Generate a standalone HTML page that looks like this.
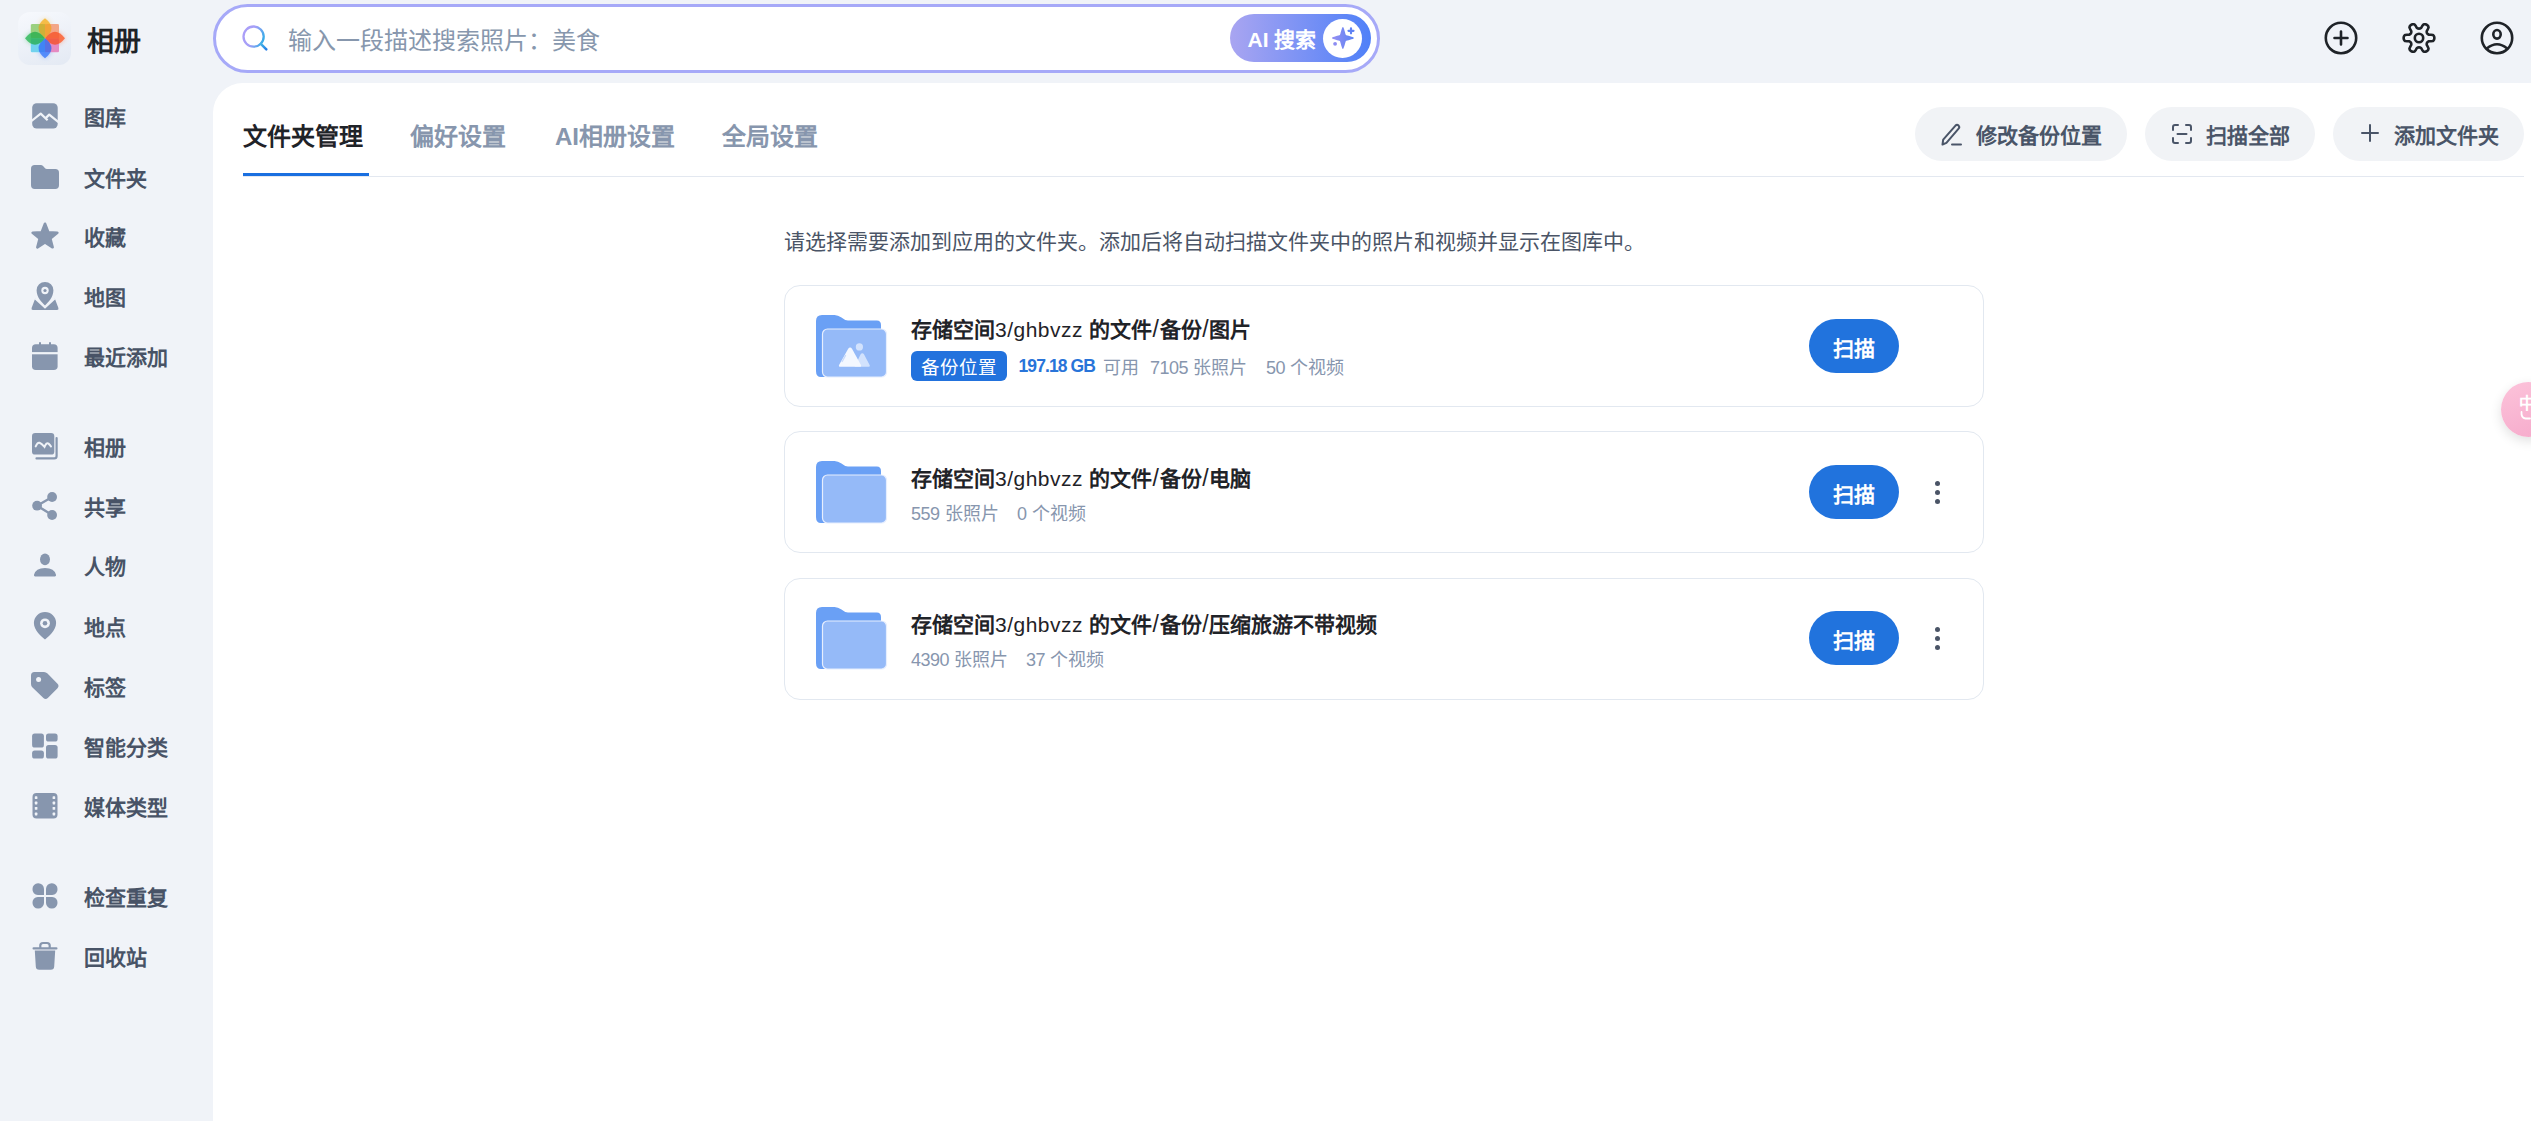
<!DOCTYPE html>
<html lang="zh-CN">
<head>
<meta charset="utf-8">
<style>
*{box-sizing:border-box;margin:0;padding:0}
html,body{width:2531px;height:1121px;overflow:hidden;background:#f0f3f8;font-family:"Liberation Sans",sans-serif;}
.abs{position:absolute}
.logo{left:18px;top:12px;width:53px;height:53px;border-radius:12px;background:linear-gradient(160deg,#f7f9fd,#e3e9f3);}
.brand{left:87px;top:22px;font-size:27px;font-weight:700;color:#1f2328;line-height:40px;white-space:nowrap}
.navtx{left:84px;font-size:21px;font-weight:700;color:#485366;line-height:36px;padding-top:2.5px;white-space:nowrap}
.nav .ic{position:absolute;left:31px;top:6px;width:28px;height:28px}
.nav .tx{position:absolute;left:84px;top:0;font-size:22px;font-weight:700;color:#485366;line-height:40px;white-space:nowrap}
.search{left:213px;top:4px;width:1167px;height:69px;border-radius:35px;border:3px solid #a6a9f8;background:#fff}
.ph{left:288px;top:22.5px;font-size:24px;font-weight:350;color:#8797ad;line-height:36px;white-space:nowrap}
.aibtn{left:1230px;top:14px;width:141px;height:48px;border-radius:24px;background:linear-gradient(90deg,#a9a5f1,#4f80f8)}
.aitx{left:1247.5px;top:21.5px;font-size:21px;font-weight:700;color:#fff;line-height:36px;white-space:nowrap}
.aicirc{left:1323px;top:19px;width:39px;height:39px;border-radius:50%;background:#fff}
.panel{left:213px;top:83px;width:2318px;height:1038px;background:#fff;border-top-left-radius:30px}
.tab{top:119px;font-size:24px;font-weight:700;line-height:36px;color:#8796ad;white-space:nowrap}
.tabline{left:243px;top:176px;width:2281px;height:1px;background:#e3e8f0}
.tabul{left:243px;top:172.5px;width:126px;height:3.5px;background:#1a6fe0}
.tbtn{top:107px;height:54px;border-radius:27px;background:#f1f3f6}
.tbtx{top:119px;font-size:21px;font-weight:700;color:#4a5568;line-height:34px;white-space:nowrap}
.desc{left:784px;top:225px;font-size:21px;font-weight:350;color:#4a5466;line-height:34px;white-space:nowrap}
.card{left:784px;width:1200px;height:122px;border:1px solid #e2e8f0;border-radius:16px;background:#fff}
.ttl{left:911px;font-size:21px;font-weight:700;color:#1f2328;line-height:32px;white-space:nowrap}
.ttl span{font-weight:400}
.meta{font-size:18px;font-weight:350;color:#8796ae;line-height:30px;white-space:nowrap}
.meta .n{letter-spacing:-0.5px}
.gb{color:#2874d9;font-weight:700;font-size:17.5px;letter-spacing:-0.9px;margin-top:-1.5px}
.ttl span{letter-spacing:0.5px}
.ttl i{font-style:normal;font-weight:400;font-size:23px;padding:0 0.7px;vertical-align:-0.5px}
.badge{left:911px;width:96px;height:30px;border-radius:6px;background:#2272dd;color:#fff;font-size:18.5px;line-height:30px;padding-top:2px;text-align:center}
.scan{left:1809px;width:90px;height:54px;border-radius:27px;background:#2173dd;color:#fff;font-size:21px;font-weight:700;line-height:54px;text-align:center;padding-top:2.5px}
.kebab{left:1935px;width:6px}
.kebab i{display:block;width:5px;height:5px;border-radius:50%;background:#4a5466;margin-bottom:4px}
.float{left:2501px;top:382px;width:55px;height:55px;border-radius:50%;background:linear-gradient(160deg,#fcc3da,#f6aacb);box-shadow:0 4px 12px rgba(0,0,0,.12)}
</style>
</head>
<body>
<!-- logo -->
<div class="abs logo"></div>
<svg class="abs" style="left:15px;top:10px" width="60" height="58" viewBox="-30 -28.2 60 58">
<defs><filter id="fg" x="-50%" y="-50%" width="200%" height="200%"><feGaussianBlur stdDeviation="2.6"/></filter>
<filter id="fb" x="-20%" y="-20%" width="140%" height="140%"><feGaussianBlur stdDeviation="0.3"/></filter>
<g id="petals">
<path d="M0,0 Q13,-10 0,-20 Q-13,-10 0,0Z" fill="#f6b93a"/>
<path d="M0,0 Q10,13 20,0 Q10,-13 0,0Z" fill="#fb6a3e"/>
<path d="M0,0 Q13,10 0,20 Q-13,10 0,0Z" fill="#4a84fb"/>
<path d="M0,0 Q-10,13 -20,0 Q-10,-13 0,0Z" fill="#3fbe66"/>
</g></defs>
<g filter="url(#fg)" opacity=".45"><use href="#petals"/></g>
<g filter="url(#fb)">
<rect x="-14.2" y="-14.2" width="14.2" height="14.2" rx="1.5" fill="#b3dd9a"/>
<rect x="0" y="-14.2" width="14" height="14.2" rx="1.5" fill="#f7bca2"/>
<rect x="0" y="0" width="14" height="14" rx="1.5" fill="#eda4d3"/>
<rect x="-14.2" y="0" width="14.2" height="14" rx="1.5" fill="#8ddff3"/>
<g opacity=".9"><use href="#petals"/></g>
<g opacity=".45" style="mix-blend-mode:multiply"><rect x="-14.2" y="-14.2" width="14.2" height="14.2" fill="#b3dd9a"/><rect x="0" y="-14.2" width="14" height="14.2" fill="#f7bca2"/><rect x="0" y="0" width="14" height="14" fill="#eda4d3"/><rect x="-14.2" y="0" width="14.2" height="14" fill="#8ddff3"/></g>
</g>
</svg>
<div class="abs brand">相册</div>

<!-- search -->
<div class="abs search"></div>
<svg class="abs" style="left:240px;top:23px" width="30" height="30" viewBox="0 0 30 30">
<defs><linearGradient id="sg" gradientUnits="userSpaceOnUse" x1="3" y1="10" x2="24" y2="17"><stop offset="0" stop-color="#ab9ef8"/><stop offset=".45" stop-color="#a59ff7"/><stop offset="1" stop-color="#34ace8"/></linearGradient>
<linearGradient id="sg2" gradientUnits="userSpaceOnUse" x1="21" y1="21" x2="27" y2="27"><stop offset="0" stop-color="#44b4e6"/><stop offset="1" stop-color="#1f78e6"/></linearGradient></defs>
<circle cx="13.6" cy="13.6" r="10.1" fill="none" stroke="url(#sg)" stroke-width="2.3"/>
<line x1="20.8" y1="20.8" x2="26.3" y2="26.3" stroke="url(#sg2)" stroke-width="2.5" stroke-linecap="round"/>
</svg>
<div class="abs ph">输入一段描述搜索照片：美食</div>
<div class="abs aibtn"></div>
<div class="abs aitx">AI 搜索</div>
<div class="abs aicirc"></div>
<svg class="abs" style="left:1323px;top:19px" width="39" height="39" viewBox="0 0 39 39">
<defs><linearGradient id="spg" x1="0" y1="0" x2="1" y2="0"><stop offset="0" stop-color="#9790f2"/><stop offset="1" stop-color="#5a82f4"/></linearGradient></defs>
<path d="M19.9,7.9 C21,8 22.4,15.5 22.9,16 C23.4,16.5 30.8,17.8 30.9,19 C30.8,20.2 23.4,21.5 22.9,22 C22.4,22.5 21,30 19.9,30 C18.8,30 17.4,22.5 16.9,22 C16.4,21.5 9,20.2 8.9,19 C9,17.8 16.4,16.5 16.9,16 C17.4,15.5 18.8,8 19.9,7.9Z" fill="url(#spg)"/>
<path d="M28,9.3 v5 M25.5,11.8 h5" stroke="#5f82f4" stroke-width="2.2" stroke-linecap="round"/>
<circle cx="12.1" cy="24.8" r="1.9" fill="#8d8df2"/>
</svg>

<!-- top right icons -->
<svg class="abs" style="left:2321px;top:18px" width="40" height="40" viewBox="0 0 40 40" fill="none" stroke="#1f2328" stroke-width="2.6" stroke-linecap="round">
<circle cx="20" cy="20" r="15.2"/><path d="M20,13.5v13M13.5,20h13"/>
</svg>
<svg class="abs" style="left:2399px;top:18px" width="40" height="40" viewBox="0 0 40 40" fill="none" stroke="#1f2328" stroke-width="2.6" stroke-linejoin="round">
<path id="gear" d="M35.35,20.00 L35.27,20.80 L35.04,21.58 L34.62,22.32 L33.96,22.97 L31.93,23.20 L29.92,23.22 L29.24,23.55 L28.75,23.90 L28.38,24.27 L28.10,24.67 L27.89,25.12 L27.75,25.63 L27.69,26.23 L27.75,26.98 L28.73,28.73 L29.55,30.60 L29.31,31.50 L28.89,32.23 L28.33,32.83 L27.68,33.29 L26.94,33.63 L26.15,33.81 L25.30,33.82 L24.41,33.57 L23.20,31.93 L22.17,30.20 L21.55,29.78 L21.00,29.53 L20.49,29.39 L20.00,29.35 L19.51,29.39 L19.00,29.53 L18.45,29.78 L17.83,30.20 L16.80,31.93 L15.59,33.57 L14.70,33.82 L13.85,33.81 L13.06,33.63 L12.33,33.29 L11.67,32.83 L11.11,32.23 L10.69,31.50 L10.45,30.60 L11.27,28.73 L12.25,26.98 L12.31,26.23 L12.25,25.63 L12.11,25.12 L11.90,24.67 L11.62,24.27 L11.25,23.90 L10.76,23.55 L10.08,23.22 L8.07,23.20 L6.04,22.97 L5.38,22.32 L4.96,21.58 L4.73,20.80 L4.65,20.00 L4.73,19.20 L4.96,18.42 L5.38,17.68 L6.04,17.03 L8.07,16.80 L10.08,16.78 L10.76,16.45 L11.25,16.10 L11.62,15.73 L11.90,15.33 L12.11,14.88 L12.25,14.37 L12.31,13.77 L12.25,13.02 L11.27,11.27 L10.45,9.40 L10.69,8.50 L11.11,7.77 L11.67,7.17 L12.32,6.71 L13.06,6.37 L13.85,6.19 L14.70,6.18 L15.59,6.43 L16.80,8.07 L17.83,9.80 L18.45,10.22 L19.00,10.47 L19.51,10.61 L20.00,10.65 L20.49,10.61 L21.00,10.47 L21.55,10.22 L22.17,9.80 L23.20,8.07 L24.41,6.43 L25.30,6.18 L26.15,6.19 L26.94,6.37 L27.68,6.71 L28.33,7.17 L28.89,7.77 L29.31,8.50 L29.55,9.40 L28.73,11.27 L27.75,13.02 L27.69,13.77 L27.75,14.37 L27.89,14.88 L28.10,15.33 L28.38,15.73 L28.75,16.10 L29.24,16.45 L29.92,16.78 L31.93,16.80 L33.96,17.03 L34.62,17.68 L35.04,18.42 L35.27,19.20Z"/>
<circle cx="20" cy="20" r="4.2"/>
</svg>
<svg class="abs" style="left:2477px;top:18px" width="40" height="40" viewBox="0 0 40 40" fill="none" stroke="#1f2328" stroke-width="2.6">
<circle cx="20" cy="20" r="15.2"/><ellipse cx="20" cy="16.3" rx="3.7" ry="4.3"/><path d="M9.8,30.5 Q20,22 30.2,30.5"/>
</svg>

<!-- panel -->
<div class="abs panel"></div>
<div class="abs tab" style="left:243px;color:#1f2328">文件夹管理</div>
<div class="abs tab" style="left:410px">偏好设置</div>
<div class="abs tab" style="left:555px">AI相册设置</div>
<div class="abs tab" style="left:722px">全局设置</div>
<div class="abs tabline"></div>
<div class="abs tabul"></div>

<div class="abs tbtn" style="left:1915px;width:212px"></div>
<svg class="abs" style="left:1938px;top:121px" width="26" height="26" viewBox="0 0 26 26" fill="none" stroke="#4a5568" stroke-width="2" stroke-linecap="round" stroke-linejoin="round">
<path d="M4.5,23.5 L5.2,18.6 L17.5,4.6 Q19,3.2 20.6,4.6 Q22,6.2 20.6,7.6 L8.4,21.8 Z"/><path d="M14,23.5h9"/>
</svg>
<div class="abs tbtx" style="left:1976px">修改备份位置</div>

<div class="abs tbtn" style="left:2145px;width:170px"></div>
<svg class="abs" style="left:2169px;top:121px" width="26" height="26" viewBox="0 0 26 26" fill="none" stroke="#4a5568" stroke-width="2" stroke-linecap="round">
<path d="M4,9V6Q4,4 6,4H9M17,4h3Q22,4 22,6V9M22,17v3Q22,22 20,22H17M9,22H6Q4,22 4,20V17M8.5,13h9"/>
</svg>
<div class="abs tbtx" style="left:2206px">扫描全部</div>

<div class="abs tbtn" style="left:2333px;width:191px"></div>
<svg class="abs" style="left:2358px;top:121px" width="24" height="24" viewBox="0 0 24 24" fill="none" stroke="#4a5568" stroke-width="2" stroke-linecap="round">
<path d="M12,4v16M4,12h16"/>
</svg>
<div class="abs tbtx" style="left:2394px">添加文件夹</div>

<div class="abs desc">请选择需要添加到应用的文件夹。添加后将自动扫描文件夹中的照片和视频并显示在图库中。</div>

<!-- card 1 -->
<div class="abs card" style="top:285px"></div>
<svg class="abs" style="left:812px;top:311px" width="80" height="70" viewBox="0 0 80 70">
<path d="M4,10 Q4,4 10,4 H22.5 Q26,4 29.5,6.5 Q33,9.5 36,9.5 H64 Q69,9 69,14 V60 Q69,66 63,66 H9 Q4,66 4,60 Z" fill="#6aa0f5"/>
<rect x="10.5" y="18" width="64" height="48" rx="5" fill="#95baf8" stroke="#e6eefe" stroke-width="1.2"/>
<circle cx="47.4" cy="35.9" r="3.6" fill="#d2e2fd"/>
<path d="M50.3,42.3 Q49.3,42.3 48.5,43.6 L42.6,55.8 H56.8 Q58.6,55.8 57.6,54 L52.1,43.6 Q51.3,42.3 50.3,42.3Z" fill="#d2e2fd"/>
<path d="M38.1,36.5 Q37,36.5 36.2,37.8 L27.2,53.8 Q26.2,55.8 28.4,55.8 H47.6 Q49.8,55.8 48.8,53.8 L40,37.8 Q39.2,36.5 38.1,36.5Z" fill="#f4f8ff"/>
<path d="M33.5,44.5 L30.2,50.5" stroke="#c9dbfb" stroke-width="1.4" stroke-linecap="round"/>
</svg>
<div class="abs ttl" style="top:313px">存储空间<span>3/ghbvzz</span> 的文件<i>/</i>备份<i>/</i>图片</div>
<div class="abs badge" style="top:351px">备份位置</div>
<div class="abs meta gb" style="left:1018.5px;top:352.5px">197.18 GB</div>
<div class="abs meta" style="left:1102.5px;top:352.5px">可用</div>
<div class="abs meta" style="left:1150px;top:352.5px"><span class="n">7105</span> 张照片</div>
<div class="abs meta" style="left:1266px;top:352.5px"><span class="n">50</span> 个视频</div>
<div class="abs scan" style="top:319px">扫描</div>

<!-- card 2 -->
<div class="abs card" style="top:431px"></div>
<svg class="abs" style="left:812px;top:457px" width="80" height="70" viewBox="0 0 80 70">
<path d="M4,10 Q4,4 10,4 H22.5 Q26,4 29.5,6.5 Q33,9.5 36,9.5 H64 Q69,9 69,14 V60 Q69,66 63,66 H9 Q4,66 4,60 Z" fill="#6aa0f5"/>
<rect x="10.5" y="18" width="64" height="48" rx="5" fill="#95baf8" stroke="#e6eefe" stroke-width="1.2"/>
</svg>
<div class="abs ttl" style="top:462px">存储空间<span>3/ghbvzz</span> 的文件<i>/</i>备份<i>/</i>电脑</div>
<div class="abs meta" style="left:911px;top:498.5px"><span class="n">559</span> 张照片</div>
<div class="abs meta" style="left:1017px;top:498.5px"><span class="n">0</span> 个视频</div>
<div class="abs scan" style="top:465px">扫描</div>
<div class="abs kebab" style="top:481px"><i></i><i></i><i></i></div>

<!-- card 3 -->
<div class="abs card" style="top:578px"></div>
<svg class="abs" style="left:812px;top:603px" width="80" height="70" viewBox="0 0 80 70">
<path d="M4,10 Q4,4 10,4 H22.5 Q26,4 29.5,6.5 Q33,9.5 36,9.5 H64 Q69,9 69,14 V60 Q69,66 63,66 H9 Q4,66 4,60 Z" fill="#6aa0f5"/>
<rect x="10.5" y="18" width="64" height="48" rx="5" fill="#95baf8" stroke="#e6eefe" stroke-width="1.2"/>
</svg>
<div class="abs ttl" style="top:608px">存储空间<span>3/ghbvzz</span> 的文件<i>/</i>备份<i>/</i>压缩旅游不带视频</div>
<div class="abs meta" style="left:911px;top:644.5px"><span class="n">4390</span> 张照片</div>
<div class="abs meta" style="left:1026px;top:644.5px"><span class="n">37</span> 个视频</div>
<div class="abs scan" style="top:611px">扫描</div>
<div class="abs kebab" style="top:627px"><i></i><i></i><i></i></div>

<!-- floating -->
<div class="abs float"></div>
<div class="abs" style="left:2518.5px;top:392px;font-size:16px;color:#fff;font-weight:900;line-height:24px">中</div>
<svg class="abs" style="left:2515px;top:408px" width="16" height="14" viewBox="0 0 16 14"><path d="M6.5,4 Q6,10 10.5,10.5 H15" fill="none" stroke="#fff" stroke-width="1.8" stroke-linecap="round"/></svg>

<!-- SIDEBAR -->
<svg class="abs" style="left:25px;top:96px" width="40" height="40" viewBox="0 0 40 40"><rect x="7.2" y="7.3" width="25.5" height="25.3" rx="4.5" fill="#8796ae"/><path d="M6.5,25 L15.7,17.6 L22.6,24.2 M21.2,21.6 L24.2,18.6 L33.5,26.2" fill="none" stroke="#f0f3f8" stroke-width="2.2" stroke-linejoin="round"/></svg>
<div class="abs navtx" style="top:97.5px">图库</div>
<svg class="abs" style="left:25px;top:156.5px" width="40" height="40" viewBox="0 0 40 40"><path d="M6,11.8 Q6,8.1 9.7,8.1 H15.6 Q17.2,8.1 18.3,9.3 L19.6,10.8 Q20.6,12 22,12 H30.3 Q34,12 34,15.7 V28.3 Q34,32 30.3,32 H9.7 Q6,32 6,28.3Z" fill="#8796ae"/></svg>
<div class="abs navtx" style="top:158.0px">文件夹</div>
<svg class="abs" style="left:25px;top:215.5px" width="40" height="40" viewBox="0 0 40 40"><path d="M20.00,7.80 L23.29,16.27 L32.36,16.78 L25.33,22.53 L27.64,31.32 L20.00,26.40 L12.36,31.32 L14.67,22.53 L7.64,16.78 L16.71,16.27Z" fill="#8796ae" stroke="#8796ae" stroke-width="2.6" stroke-linejoin="round"/></svg>
<div class="abs navtx" style="top:217.0px">收藏</div>
<svg class="abs" style="left:25px;top:276px" width="40" height="40" viewBox="0 0 40 40"><path d="M20,29.5 C17,26.5 11.6,21.5 11.6,14.3 A8.4,8.4 0 0 1 28.4,14.3 C28.4,21.5 23,26.5 20,29.5Z" fill="#8796ae"/><circle cx="20" cy="14.5" r="3.7" fill="#f0f3f8"/><circle cx="20" cy="14.5" r="1.6" fill="#8796ae"/><path d="M8,34 Q6,34 6.6,32 L10.2,22.6 L20,31.6 L29.8,22.6 L33.4,32 Q34,34 32,34Z" fill="#8796ae"/><path d="M10.2,22.6 L20,31.6 L29.8,22.6" fill="none" stroke="#f0f3f8" stroke-width="1.6"/></svg>
<div class="abs navtx" style="top:277.5px">地图</div>
<svg class="abs" style="left:25px;top:336px" width="40" height="40" viewBox="0 0 40 40"><rect x="7" y="8.3" width="25.6" height="25.7" rx="3.8" fill="#8796ae"/><rect x="6" y="16.1" width="28" height="2.2" fill="#f0f3f8"/><rect x="14" y="6" width="2" height="4" rx="1" fill="#8796ae"/><rect x="24" y="6" width="2" height="4" rx="1" fill="#8796ae"/></svg>
<div class="abs navtx" style="top:337.5px">最近添加</div>
<svg class="abs" style="left:25px;top:426px" width="40" height="40" viewBox="0 0 40 40"><rect x="7" y="7" width="22.3" height="21.6" rx="3.2" fill="#8796ae"/><path d="M10.7,20.4 Q12.5,16.2 14.5,16.8 Q16.5,17.5 19.5,20.8 Q21.5,16 23.5,17.6 Q25,18.8 26,20.5" fill="none" stroke="#f0f3f8" stroke-width="2" stroke-linecap="round"/><path d="M11.5,32.4 H29.3 Q31.6,32.4 31.6,30 V12" fill="none" stroke="#8796ae" stroke-width="2.2" stroke-linecap="round"/></svg>
<div class="abs navtx" style="top:427.5px">相册</div>
<svg class="abs" style="left:25px;top:486px" width="40" height="40" viewBox="0 0 40 40"><circle cx="27.1" cy="11" r="4.9" fill="#8796ae"/><circle cx="12.1" cy="19.7" r="4.9" fill="#8796ae"/><circle cx="27.1" cy="29" r="4.9" fill="#8796ae"/><path d="M27.1,11 L12.1,19.7 L27.1,29" fill="none" stroke="#8796ae" stroke-width="2.4"/></svg>
<div class="abs navtx" style="top:487.5px">共享</div>
<svg class="abs" style="left:25px;top:545px" width="40" height="40" viewBox="0 0 40 40"><ellipse cx="20" cy="14.3" rx="5" ry="5.9" fill="#8796ae"/><path d="M10.2,31.4 Q8.6,31.4 9,29.8 Q10.5,22.9 20,22.9 Q29.5,22.9 31,29.8 Q31.4,31.4 29.8,31.4Z" fill="#8796ae"/></svg>
<div class="abs navtx" style="top:546.5px">人物</div>
<svg class="abs" style="left:25px;top:606px" width="40" height="40" viewBox="0 0 40 40"><path d="M20,33.6 C16.5,30.5 8.9,24.5 8.9,17 A11.1,11.1 0 0 1 31.1,17 C31.1,24.5 23.5,30.5 20,33.6Z" fill="#8796ae"/><circle cx="20" cy="17.3" r="4.9" fill="#f0f3f8"/><circle cx="20" cy="17.3" r="2.3" fill="#8796ae"/></svg>
<div class="abs navtx" style="top:607.5px">地点</div>
<svg class="abs" style="left:25px;top:666px" width="40" height="40" viewBox="0 0 40 40"><path d="M6,9.5 Q6,6 9.5,6 H19 Q21,6 22.5,7.5 L32.5,17.8 Q34.5,20 32.5,22.2 L22.8,32 Q20.6,34.2 18.4,32 L7.5,21.5 Q6,20 6,18Z" fill="#8796ae"/><circle cx="13.6" cy="13.6" r="2.5" fill="#f0f3f8"/></svg>
<div class="abs navtx" style="top:667.5px">标签</div>
<svg class="abs" style="left:25px;top:726px" width="40" height="40" viewBox="0 0 40 40"><rect x="7.1" y="7.6" width="11.8" height="14" rx="2.6" fill="#8796ae"/><rect x="7.1" y="24.6" width="11.8" height="8" rx="2.6" fill="#8796ae"/><rect x="21" y="7.6" width="11.6" height="8" rx="2.6" fill="#8796ae"/><rect x="21" y="19" width="11.6" height="13.6" rx="2.6" fill="#8796ae"/></svg>
<div class="abs navtx" style="top:727.5px">智能分类</div>
<svg class="abs" style="left:25px;top:786px" width="40" height="40" viewBox="0 0 40 40"><rect x="7.5" y="7" width="25" height="25.6" rx="4" fill="#8796ae"/><rect x="9.8" y="10.3" width="2.6" height="2.8" rx=".6" fill="#f0f3f8"/><rect x="9.8" y="15.6" width="2.6" height="2.8" rx=".6" fill="#f0f3f8"/><rect x="9.8" y="21" width="2.6" height="2.8" rx=".6" fill="#f0f3f8"/><rect x="9.8" y="26.6" width="2.6" height="2.8" rx=".6" fill="#f0f3f8"/><rect x="27.6" y="10.3" width="2.6" height="2.8" rx=".6" fill="#f0f3f8"/><rect x="27.6" y="15.6" width="2.6" height="2.8" rx=".6" fill="#f0f3f8"/><rect x="27.6" y="21" width="2.6" height="2.8" rx=".6" fill="#f0f3f8"/><rect x="27.6" y="26.6" width="2.6" height="2.8" rx=".6" fill="#f0f3f8"/></svg>
<div class="abs navtx" style="top:787.5px">媒体类型</div>
<svg class="abs" style="left:25px;top:876px" width="40" height="40" viewBox="0 0 40 40"><path d="M19,19 H12.8 A5.5,5.5 0 0 1 7.5,13 A5.7,5.7 0 0 1 13,7.2 A5.7,5.7 0 0 1 19,13Z" fill="#8796ae"/><path d="M21,19 H27.2 A5.5,5.5 0 0 0 32.5,13 A5.7,5.7 0 0 0 27,7.2 A5.7,5.7 0 0 0 21,13Z" fill="#8796ae"/><path d="M19,21 H12.8 A5.5,5.5 0 0 0 7.5,27 A5.7,5.7 0 0 0 13,32.6 A5.7,5.7 0 0 0 19,27Z" fill="#8796ae"/><path d="M21,21 H27.2 A5.5,5.5 0 0 1 32.5,27 A5.7,5.7 0 0 1 27,32.6 A5.7,5.7 0 0 1 21,27Z" fill="#8796ae"/></svg>
<div class="abs navtx" style="top:877.5px">检查重复</div>
<svg class="abs" style="left:25px;top:936px" width="40" height="40" viewBox="0 0 40 40"><path d="M9.8,14.6 H30.2 L29.2,30.6 Q29,33.8 25.8,33.8 H14.2 Q11,33.8 10.8,30.6Z" fill="#8796ae"/><rect x="7.5" y="11.3" width="25" height="2.3" rx="1.1" fill="#8796ae"/><path d="M15.3,12 V9.6 Q15.3,7 18,7 H22 Q24.7,7 24.7,9.6 V12" fill="none" stroke="#8796ae" stroke-width="2.2"/></svg>
<div class="abs navtx" style="top:937.5px">回收站</div>
</body>
</html>
